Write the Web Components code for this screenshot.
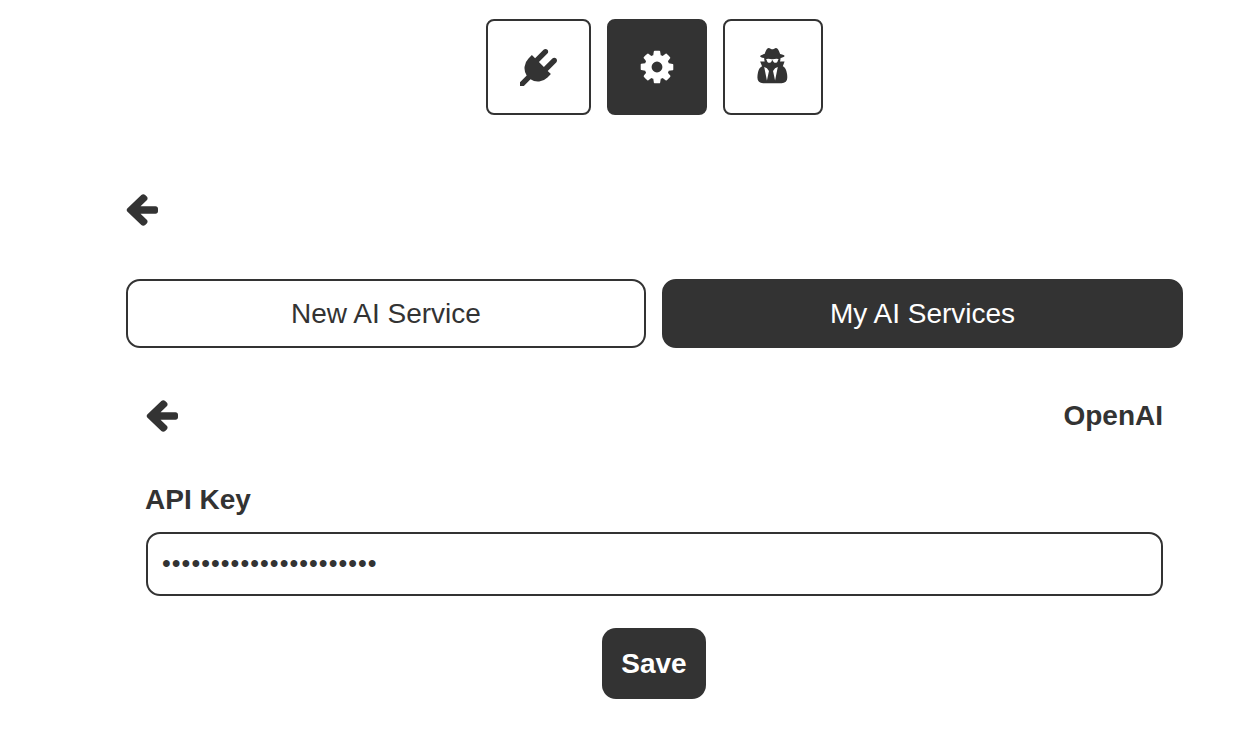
<!DOCTYPE html>
<html lang="en"><head><meta charset="utf-8"><title>Settings</title>
<style>
html,body{margin:0;padding:0;background:#fff}
body{font-family:"Liberation Sans",Arial,sans-serif;color:#333}
</style></head><body>
<app-shell>
  <nav-bar slot="nav">
    <icon-button icon="plug" wide></icon-button>
    <icon-button icon="cog" active></icon-button>
    <icon-button icon="secret"></icon-button>
  </nav-bar>
  <back-arrow></back-arrow>
  <tab-bar>
    <tab-button>New AI Service</tab-button>
    <tab-button active>My AI Services</tab-button>
  </tab-bar>
  <service-form name="OpenAI"></service-form>
</app-shell>
<script>
const ICONS={
 plug:{vb:"47 -47 1792 1792",w:38,h:38,d:"M1755 453q37 38 37 90.5t-37 90.5l-401 400 150 150-160 160q-163 163-389.5 186.5t-411.5-100.5l-362 362h-181v-181l362-362q-124-185-100.5-411.5t186.5-389.5l160-160 150 150 400-401q38-37 91-37t90 37 37 90.5-37 90.5l-400 401 234 234 401-400q38-37 91-37t90 37z"},
 cog:{vb:"0 0 1792 1792",w:38,h:38,d:"M1152 896q0-106-75-181t-181-75-181 75-75 181 75 181 181 75 181-75 75-181zm512-109v222q0 12-8 23t-20 13l-185 28q-19 54-39 91 35 50 107 138 10 12 10 25t-9 23q-27 37-99 108t-94 71q-12 0-26-9l-138-108q-44 23-91 38-16 136-29 186-7 28-36 28h-222q-14 0-24.5-8.5t-11.5-21.5l-28-184q-49-16-90-37l-141 107q-10 9-25 9-14 0-25-11-126-114-165-168-7-10-7-23 0-12 8-23 15-21 51-66.5t54-70.5q-27-50-41-99l-183-27q-13-2-21-12.5t-8-23.5v-222q0-12 8-23t19-13l186-28q14-46 39-92-40-57-107-138-10-12-10-24 0-10 9-23 26-36 98.5-107.5t94.5-71.5q13 0 26 10l138 107q44-23 91-38 16-136 29-186 7-28 36-28h222q14 0 24.5 8.5t11.5 21.5l28 184q49 16 90 37l142-107q9-9 24-9 13 0 25 10 129 119 165 170 7 8 7 22 0 12-8 23-15 21-51 66.5t-54 70.5q26 50 41 98l183 28q13 2 21 12.5t8 23.5z"},
 secret:{vb:"118 0 1536 1792",w:33,h:38,d:"M576 1536l96-448-96-128-128-64zm384 0l128-640-128 64-96 128zm160-1010q-2-4-4-6-10-8-96-8-70 0-167 19-7 2-21 2t-21-2q-97-19-167-19-86 0-96 8-2 2-4 6 2 18 4 27 2 3 7.5 6.5t7.5 10.5q2 4 7.5 20.5t7 20.5 7.5 17 8.5 17 9 14 12 13.5 14 9.5 17.5 8 20.5 4 24.5 2q36 0 59-12.5t32.5-30 14.5-34.5 11.5-29.5 17.5-12.5h12q11 0 17.5 12.5t11.5 29.5 14.5 34.5 32.5 30 59 12.5q13 0 24.5-2t20.5-4 17.5-8 14-9.5 12-13.5 9-14 8.5-17 7.5-17 7-20.5 7.5-20.5q2-7 7.5-10.5t7.5-6.5q2-9 4-27zm416 879q0 121-73 190t-194 69h-874q-121 0-194-69t-73-190q0-61 4.5-118t19-125.5 37.5-123.5 63.5-103.5 93.5-74.5l-90-220h214q-22-64-22-128 0-12 2-32-194-40-194-96 0-57 210-99 17-62 51.5-134t70.5-114q32-37 76-37 30 0 84 31t84 31 84-31 84-31q44 0 76 36 36 42 70.5 114t51.5 134q210 42 210 99 0 56-194 96 7 81-20 160h214l-82 225q63 33 107.5 96.5t65.5 143.5 29 151.5 8 148.5z"},
 arrow:{vb:"160 64 1504 1792",w:32,h:36,par:"none",d:"M1664 896v128q0 53-32.5 90.5t-84.5 37.5h-704l293 294q38 36 38 90t-38 90l-75 76q-37 37-90 37-52 0-90-37l-651-652q-37-37-37-90 0-52 37-91l651-650q38-38 90-38 52 0 90 38l75 74q38 38 38 91t-38 91l-293 293h704q52 0 84.5 37.5t32.5 90.5z"}
};
function svg(name){const i=ICONS[name];
 const par=i.par?` preserveAspectRatio="${i.par}"`:"";
 return `<svg xmlns="http://www.w3.org/2000/svg" width="${i.w}" height="${i.h}" viewBox="${i.vb}"${par} fill="currentColor" aria-hidden="true"><path d="${i.d}"/></svg>`;}
function def(tag,html){customElements.define(tag,class extends HTMLElement{
 constructor(){super();this.attachShadow({mode:"open"});}
 connectedCallback(){this.shadowRoot.innerHTML=typeof html==="function"?html(this):html;}
});}
def("app-shell",`<style>:host{display:block;box-sizing:border-box;width:1250px;height:756px;padding:19px 67px 0 126px;overflow:hidden}</style><slot name="nav"></slot><slot></slot>`);
def("nav-bar",`<style>:host{display:flex;justify-content:center;gap:16px;margin-bottom:77px}</style><slot></slot>`);
def("icon-button",el=>`<style>:host{display:flex;align-items:center;justify-content:center;box-sizing:border-box;height:96px;width:${el.hasAttribute("wide")?105:100}px;border:2px solid #333;border-radius:8px;color:${el.hasAttribute("active")?"#fff":"#333"};background:${el.hasAttribute("active")?"#333":"#fff"}}
 svg{display:block}</style>${svg(el.getAttribute("icon"))}`);
def("back-arrow",`<style>:host{display:flex;align-items:center;height:36px;color:#333}svg{display:block}</style>${svg("arrow")}`);
def("tab-bar",`<style>:host{display:grid;grid-template-columns:520px 521px;gap:16px;margin-top:51px}</style><slot></slot>`);
def("tab-button",el=>`<style>:host{display:flex;align-items:center;justify-content:center;box-sizing:border-box;height:69px;border:2px solid #333;border-radius:14px;font-size:28px;color:${el.hasAttribute("active")?"#fff":"#333"};background:${el.hasAttribute("active")?"#333":"#fff"}}</style><slot></slot>`);
def("service-form",el=>`<style>:host{display:block;padding:0 20px;margin-top:50px}
 .head{display:flex;justify-content:space-between;align-items:center;height:36px;margin-bottom:50px}
 .head svg{display:block}
 .name{font-size:28px;font-weight:700}
 label{display:block;font-size:28px;font-weight:700;line-height:32px;margin:0 0 16px -1px}
 input{display:block;box-sizing:border-box;width:100%;height:64px;border:2px solid #333;border-radius:14px;padding:0 14px 2px;font:25px "Liberation Sans",Arial,sans-serif;letter-spacing:1.05px;color:#333;background:#fff;outline:none}
 .actions{display:flex;justify-content:center;margin-top:32px;padding-right:1px}
 .save{width:104px;height:71px;border-radius:14px;background:#333;color:#fff;font-size:28px;font-weight:700;display:flex;align-items:center;justify-content:center}
</style>
<div class="head">${svg("arrow")}<span class="name">${el.getAttribute("name")}</span></div>
<label for="k">API Key</label>
<input id="k" type="password" value="sk-0123456789abcdefghi">
<div class="actions"><div class="save">Save</div></div>`);
</script>
</body></html>
